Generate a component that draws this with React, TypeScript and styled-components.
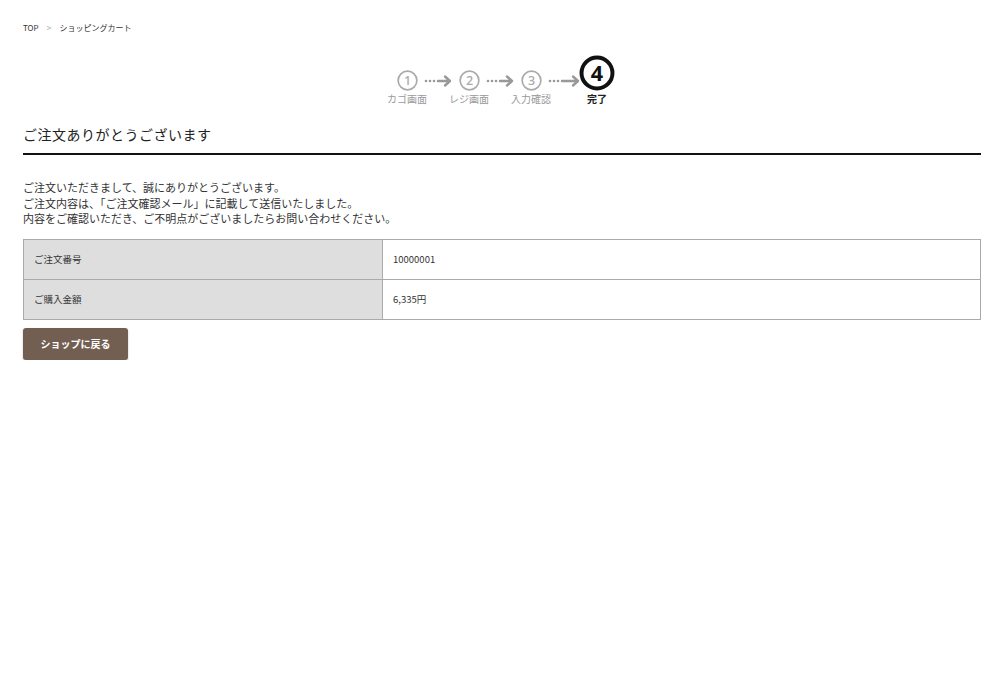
import React from "react";
import styled, { createGlobalStyle } from "styled-components";

const Global = createGlobalStyle`
  body { margin: 0; background: #fff; font-family: "Noto Sans CJK JP", "Noto Sans", sans-serif; color: #333; }
`;
const Page = styled.div`padding: 0 19px 0 23px;`;
const Crumbs = styled.div`display: flex; align-items: center; gap: 8px; font-size: 8px; padding-top: 21px; height: 12px; color: #333;`;
const Sep = styled.span`color: #aaa; font-size: 9px;`;
const Steps = styled.div`display: flex; justify-content: center; margin-top: 22px; padding-left: 0px;`;
const Step = styled.div`display: flex; flex-direction: column; align-items: center; width: 46px;`;
const CircleRow = styled.div`height: 36px; display: flex; align-items: flex-end; justify-content: center;`;
const Label = styled.div<{ $active?: boolean }>`font-size: 10px; line-height: 14px; margin-top: 1px; color: ${p => p.$active ? "#222" : "#999"}; font-weight: ${p => p.$active ? 700 : 400};`;
const Arrow = styled.div<{ $w: number }>`width: ${p => p.$w}px; margin: 0 -6px; height: 36px; display: flex; align-items: flex-end; padding-bottom: 3px; box-sizing: border-box; position: relative; z-index: 1;`;
const Title = styled.h1`font-size: 14px; font-weight: 400; margin: 18px 0 0; padding-bottom: 9px; border-bottom: 2px solid #111; color: #222; letter-spacing: 0.5px;`;
const Lead = styled.p`font-size: 11px; line-height: 15.5px; margin: 25px 0 12px; color: #333;`;
const Table = styled.div`border: 1px solid #aaa; display: grid; grid-template-columns: 359px 1fr;`;
const Th = styled.div<{ $last?: boolean }>`background: #dedede; height: 39px; display: flex; align-items: center; padding-left: 10px; font-size: 9.5px; border-right: 1px solid #aaa; ${p => !p.$last && "border-bottom: 1px solid #aaa;"}`;
const Td = styled.div<{ $last?: boolean }>`height: 39px; display: flex; align-items: center; padding-left: 10px; font-size: 9.5px; ${p => !p.$last && "border-bottom: 1px solid #aaa;"}`;
const Button = styled.button`margin-top: 8px; width: 105px; height: 32px; background: #735f52; color: #fff; border: none; border-radius: 3px; font-family: inherit; font-weight: 700; font-size: 10px; box-shadow: 0 1px 2px rgba(0,0,0,.25);`;

const Circle = ({ n, big }: { n: number; big?: boolean }) => {
  const s = big ? 36 : 21;
  const c = big ? "#111" : "#aaa";
  return (
    <svg width={s} height={s} viewBox="0 0 20 20">
      <circle cx="10" cy="10" r={big ? 8.6 : 8.9} fill="none" stroke={c} strokeWidth={big ? 2.2 : 1.6} />
      <text x="10" y="14.3" textAnchor="middle" fontSize="12" fontWeight={big ? 700 : 500} fill={c} fontFamily="Noto Sans, sans-serif">{n}</text>
    </svg>
  );
};
const Dots = ({ w }: { w: number }) => (
  <svg width={w} height="14" viewBox={`0 0 ${w} 14`}>
    {[2, 6, 10].map(x => <circle key={x} cx={x} cy="7" r="1.3" fill="#999" />)}
    <path d={`M14 7 H${w - 2} M${w - 7} 2.5 L${w - 2} 7 L${w - 7} 11.5`} stroke="#999" strokeWidth="2.4" fill="none" strokeLinecap="round" strokeLinejoin="round" />
  </svg>
);

export default function App() {
  const steps = ["カゴ画面", "レジ画面", "入力確認", "完了"];
  return (
    <Page>
      <Global />
      <Crumbs><span>TOP</span><Sep>&gt;</Sep><span>ショッピングカート</span></Crumbs>
      <Steps>
        {steps.map((s, i) => (
          <React.Fragment key={s}>
            {i > 0 && <Arrow $w={i === 3 ? 32 : 28}><Dots w={i === 3 ? 32 : 28} /></Arrow>}
            <Step>
              <CircleRow><Circle n={i + 1} big={i === 3} /></CircleRow>
              <Label $active={i === 3}>{s}</Label>
            </Step>
          </React.Fragment>
        ))}
      </Steps>
      <Title>ご注文ありがとうございます</Title>
      <Lead>
        ご注文いただきまして、誠にありがとうございます。<br />
        ご注文内容は、「ご注文確認メール」に記載して送信いたしました。<br />
        内容をご確認いただき、ご不明点がございましたらお問い合わせください。
      </Lead>
      <Table>
        <Th>ご注文番号</Th><Td>10000001</Td>
        <Th $last>ご購入金額</Th><Td $last>6,335円</Td>
      </Table>
      <Button>ショップに戻る</Button>
    </Page>
  );
}
